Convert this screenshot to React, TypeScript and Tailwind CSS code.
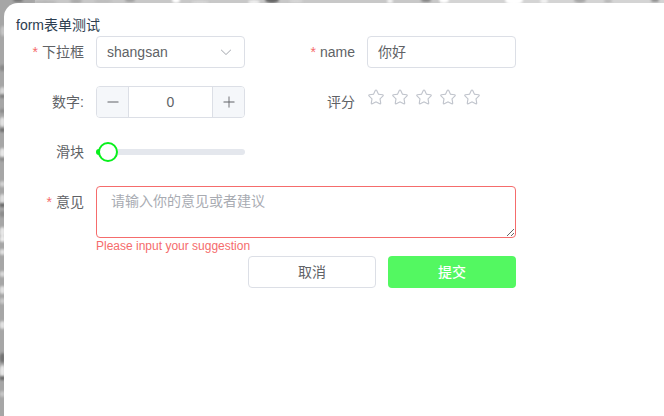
import React, { useState } from 'react';

function Label({ text, required }: { text: string; required?: boolean }) {
  return (
    <div className="flex h-8 w-20 shrink-0 items-center justify-end pr-3">
      {required && <span className="mr-1 text-[#f56c6c]">*</span>}
      <span>{text}</span>
    </div>
  );
}

// Pebbled grey backdrop visible around the panel's edge
function Backdrop() {
  const top: [number, number, number, number, string][] = [
    [18, 0, 5, 2, '#757575'], [45, 2, 12, 1.5, '#b5b5b5'], [76, 1, 6, 2, '#a9a9a9'],
    [103, 1, 9, 2, '#bdbdbd'], [130, 0, 5, 2, '#a0a0a0'], [176, 0, 4, 3, '#ffffff'],
    [200, 2, 9, 1, '#dedede'], [254, 2, 6, 2, '#f0f0f0'], [272, 0, 7, 3, '#666666'],
    [296, 1, 7, 1, '#e0e0e0'], [390, 1, 3, 2, '#f4f4f4'], [426, 0, 5, 2, '#858585'],
    [444, 0, 5, 3, '#ffffff'], [514, 0, 9, 5, '#ffffff'], [544, 1, 4, 2, '#f4f4f4'],
    [580, 0, 6, 3, '#a8a8a8'], [608, 1, 4, 1, '#a8a8a8'], [655, 0, 4, 2, '#909090'],
  ];
  const side: [number, number, string][] = [
    [68, 3, '#858585'], [92, 5, '#dddddd'], [96, 2, '#777777'], [111, 2, '#888888'],
    [122, 5, '#e8e8e8'], [130, 2, '#6c6c6c'], [153, 5, '#eeeeee'], [159, 2, '#888888'],
    [184, 3, '#d5d5d5'], [199, 5, '#e3e3e3'], [205, 2, '#606060'], [214, 3, '#888888'],
    [232, 5, '#eeeeee'], [239, 3, '#f3f3f3'], [252, 3, '#e5e5e5'], [274, 3, '#dddddd'],
    [290, 4, '#e8e8e8'], [301, 3, '#cccccc'], [325, 4, '#e8e8e8'], [358, 5, '#6e6e6e'],
    [371, 6, '#eeeeee'], [378, 2, '#606060'], [394, 3, '#c8c8c8'],
  ];
  return (
    <svg className="absolute inset-0 h-full w-full" viewBox="0 0 664 416">
      <rect width="664" height="416" fill="#a6a6a6" />
      <rect x="35" width="629" height="4" fill="#c8c8c8" />
      <rect x="440" width="224" height="4" fill="#d4d4d4" />
      <g className="blur-[0.8px]">
        {top.map(([x, y, rx, ry, c]) => (
          <ellipse key={x} cx={x} cy={y} rx={rx} ry={ry} fill={c} />
        ))}
        {side.map(([y, r, c]) => (
          <ellipse key={y} cx="2.5" cy={y} rx="3" ry={r} fill={c} opacity="0.9" />
        ))}
        <ellipse cx="3" cy="31" rx="2.5" ry="5" fill="#c5c5c5" />
      </g>
    </svg>
  );
}

function Star() {
  return (
    <svg className="h-[18px] w-[18px]" viewBox="0 0 1024 1024" fill="#c0c4cc">
      <path d="m512 747.84 228.16 119.936a6.4 6.4 0 0 0 9.28-6.72l-43.52-254.08 184.512-179.904a6.4 6.4 0 0 0-3.52-10.88l-255.104-37.12L517.76 147.904a6.4 6.4 0 0 0-11.52 0L392.192 379.072l-255.104 37.12a6.4 6.4 0 0 0-3.52 10.88L318.08 606.976l-43.584 254.08a6.4 6.4 0 0 0 9.28 6.72zM313.6 924.48a70.4 70.4 0 0 1-102.144-74.24l37.888-220.928L88.96 472.96A70.4 70.4 0 0 1 128 352.896l221.76-32.256 99.2-200.96a70.4 70.4 0 0 1 126.208 0l99.2 200.96 221.824 32.256a70.4 70.4 0 0 1 39.04 120.064L774.72 629.376l37.888 220.928a70.4 70.4 0 0 1-102.144 74.24L512 820.096l-198.4 104.32z" />
    </svg>
  );
}

export default function App() {
  const [count, setCount] = useState(0);
  return (
    <div className="relative h-[416px] w-[664px] overflow-hidden pl-1 pt-[3px] font-['Liberation_Sans','Noto_Sans_CJK_SC',sans-serif] text-sm text-[#606266]">
      <Backdrop />
      <main className="relative h-[413px] rounded-tl-[14px] bg-white pl-3 pt-3">
        <h1 className="h-[21px] leading-[21px] text-[#2c3e50]">form表单测试</h1>
        <form className="flex w-[500px] flex-col" onSubmit={(e) => e.preventDefault()}>
          <div className="mb-[18px] flex justify-between">
            <div className="flex">
              <Label text="下拉框" required />
              <div className="flex h-8 w-[149px] items-center justify-between rounded border border-[#dcdfe6] pl-2.5 pr-[11px]">
                <span>shangsan</span>
                <svg className="h-3.5 w-3.5" viewBox="0 0 1024 1024" fill="#a8abb2">
                  <path d="M831.872 340.864 512 652.672 192.128 340.864a30.592 30.592 0 0 0-42.752 0 29.12 29.12 0 0 0 0 41.6L489.664 714.24a32 32 0 0 0 44.672 0l340.288-331.712a29.12 29.12 0 0 0 0-41.728 30.592 30.592 0 0 0-42.752 0z" />
                </svg>
              </div>
            </div>
            <div className="flex">
              <Label text="name" required />
              <div className="flex h-8 w-[149px] items-center rounded border border-[#dcdfe6] px-2.5">你好</div>
            </div>
          </div>

          <div className="mb-[18px] flex justify-between">
            <div className="flex">
              <Label text="数字:" />
              <div className="flex h-8 w-[149px] overflow-hidden rounded border border-[#dcdfe6]">
                <button type="button" aria-label="decrease" onClick={() => setCount(count - 1)} className="flex w-8 items-center justify-center border-r border-[#dcdfe6] bg-[#f5f7fa]">
                  <svg className="h-3.5 w-3.5" viewBox="0 0 1024 1024" fill="currentColor">
                    <path d="M128 544h768a32 32 0 1 0 0-64H128a32 32 0 0 0 0 64z" />
                  </svg>
                </button>
                <span className="flex flex-1 items-center justify-center">{count}</span>
                <button type="button" aria-label="increase" onClick={() => setCount(count + 1)} className="flex w-8 items-center justify-center border-l border-[#dcdfe6] bg-[#f5f7fa]">
                  <svg className="h-3.5 w-3.5" viewBox="0 0 1024 1024" fill="currentColor">
                    <path d="M480 480V128a32 32 0 0 1 64 0v352h352a32 32 0 1 1 0 64H544v352a32 32 0 1 1-64 0V544H128a32 32 0 0 1 0-64h352z" />
                  </svg>
                </button>
              </div>
            </div>
            <div className="flex">
              <Label text="评分" />
              <div className="flex w-[149px] gap-1.5 pt-0.5">
                <Star /><Star /><Star /><Star /><Star />
              </div>
            </div>
          </div>

          <div className="mb-[18px] flex">
            <Label text="滑块" />
            <div className="flex h-8 w-[149px] items-center">
              <div className="relative flex h-1.5 w-full items-center rounded-[3px] bg-[#e4e7ed]">
                <div className="h-1.5 w-3 rounded-l-[3px] bg-[#08f01c]" />
                <div className="absolute left-0.5 h-5 w-5 rounded-full border-2 border-[#08f01c] bg-white" />
              </div>
            </div>
          </div>

          <div className="flex h-[70px]">
            <Label text="意见" required />
            <div className="flex-1">
              <textarea
                placeholder="请输入你的意见或者建议"
                className="block h-[52px] w-full resize rounded border border-[#f56c6c] px-3.5 py-1 leading-[21px] outline-none placeholder:text-[#a8abb2]"
              />
              <p className="pt-0.5 text-xs leading-3 text-[#f56c6c]">Please input your suggestion</p>
            </div>
          </div>

          <div className="flex justify-end gap-3">
            <button type="button" className="h-8 w-32 rounded border border-[#dcdfe6] bg-white">取消</button>
            <button type="submit" className="h-8 w-32 rounded bg-[#53f861] font-medium text-white">提交</button>
          </div>
        </form>
      </main>
    </div>
  );
}
